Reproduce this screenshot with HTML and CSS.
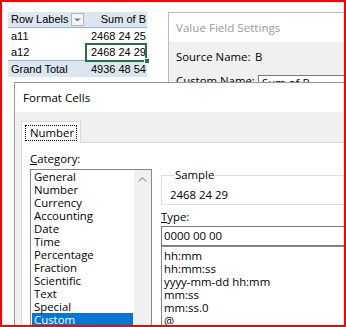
FILE: index.html
```html
<!DOCTYPE html>
<html>
<head>
<meta charset="utf-8">
<link rel="stylesheet" href="styles.css">
</head>
<body>
<div class="frame">
  <div class="pivot">
    <div class="c hdr lab"><span>Row Labels</span><span class="dd"><svg width="7" height="4" viewBox="0 0 7 4"><path d="M0 0.5h7L3.5 3.5z" fill="#808080"/></svg></span></div>
    <div class="c hdr num">Sum of B</div>
    <div class="c">a11</div>
    <div class="c num">2468 24 25</div>
    <div class="c">a12</div>
    <div class="c num sel">2468 24 29<span class="handle"></span></div>
    <div class="c tot">Grand Total</div>
    <div class="c tot num">4936 48 54</div>
  </div>

  <div class="win vfs">
    <div class="title">Value Field Settings</div>
    <div class="vbody">
      <div class="vlabel">Source Name:</div>
      <div class="vval">B</div>
      <div class="vlabel cn">Custom Name:</div>
      <div class="vinput">Sum of B</div>
    </div>
  </div>

  <div class="win fc">
    <div class="title">Format Cells</div>
    <div class="fbody">
      <div class="tab"><span class="focus">Number</span></div>
      <div class="panel">
        <div class="col-left">
          <div class="lbl"><u>C</u>ategory:</div>
          <div class="listbox">
            <div class="items">
              <div class="it">General</div>
              <div class="it">Number</div>
              <div class="it">Currency</div>
              <div class="it">Accounting</div>
              <div class="it">Date</div>
              <div class="it">Time</div>
              <div class="it">Percentage</div>
              <div class="it">Fraction</div>
              <div class="it">Scientific</div>
              <div class="it">Text</div>
              <div class="it">Special</div>
              <div class="it on">Custom</div>
            </div>
            <div class="sbar"><div class="up"><svg width="9" height="5" viewBox="0 0 9 5"><path d="M0.5 4.5L4.5 0.8L8.5 4.5" fill="none" stroke="#a6a6a6" stroke-width="1.2"/></svg></div></div>
          </div>
        </div>
        <div class="col-right">
          <fieldset class="sample">
            <legend>Sample</legend>
            <div class="sval">2468 24 29</div>
          </fieldset>
          <div class="lbl tlbl"><u>T</u>ype:</div>
          <div class="tinput">0000 00 00</div>
          <div class="tlist">
            <div class="ti">hh:mm</div>
            <div class="ti">hh:mm:ss</div>
            <div class="ti">yyyy-mm-dd hh:mm</div>
            <div class="ti">mm:ss</div>
            <div class="ti">mm:ss.0</div>
            <div class="ti">@</div>
          </div>
        </div>
      </div>
    </div>
  </div>
</div>
</body>
</html>
```

FILE: styles.css
```css
* { box-sizing: border-box; }
html, body { margin: 0; padding: 0; }
body { width: 346px; height: 327px; overflow: hidden; background: #fff; }

.frame {
  position: relative;
  width: 346px;
  height: 327px;
  border: 2px solid #ff0000;
  overflow: hidden;
  background: #fff;
  font-family: "Open Sans", "Noto Sans", sans-serif;
  font-size: 11.4px;
  color: #000;
}

/* pivot table */
.pivot {
  margin: 10px 0 0 6px;
  width: 139px;
  display: grid;
  grid-template-columns: 77px 62px;
  font-family: "Liberation Sans", Arial, sans-serif;
  font-size: 11px;
}
.pivot .c {
  height: 16px;
  line-height: 16px;
  padding-left: 3px;
  white-space: nowrap;
}
.pivot .num { text-align: right; padding-right: 1px; padding-left: 0; }
.pivot .hdr {
  background: #dce6f1;
  border-bottom: 1px solid #95b3d7;
  line-height: 15px;
}
.pivot .lab {
  display: flex;
  justify-content: space-between;
  align-items: center;
  padding-right: 1px;
}
.dd {
  width: 13px;
  height: 13px;
  border: 1px solid #b4b4b4;
  background: #f4f4f4;
  display: flex;
  align-items: center;
  justify-content: center;
  flex: none;
}
.pivot .tot {
  background: #dce6f1;
  border-top: 1px solid #95b3d7;
  height: 17px;
}
.sel { position: relative; }
.sel::after {
  content: "";
  position: absolute;
  left: 0; right: 0; top: -1px; bottom: -2px;
  border: 2px solid #217346;
}
.handle {
  position: absolute;
  right: -3px;
  bottom: -4px;
  width: 6px;
  height: 6px;
  background: #217346;
  border: 1px solid #fff;
  z-index: 2;
}

/* windows */
.win {
  position: absolute;
  background: #f0f0f0;
  border: 1px solid #a0a0a0;
}
.win .title {
  height: 29px;
  line-height: 29px;
  background: #fff;
  white-space: nowrap;
  font-size: 11.6px;
}
.vfs { left: 166px; top: 10px; width: 200px; height: 100px; border-color: #b9b9b9; }
.vfs .title { padding-left: 7px; color: #9a9a9a; }
.vbody {
  display: grid;
  grid-template-columns: 79px 1fr;
  align-items: start;
  padding: 8px 0 0 7px;
  row-gap: 9px;
  white-space: nowrap;
}
.vlabel, .vval { line-height: 14px; }
.vlabel.cn { padding-top: 1px; }
.vinput {
  margin: 2px 0 0 3px;
  height: 20px;
  border: 1px solid #7a7a7a;
  background: #fff;
  padding: 0 3px;
  line-height: 14px;
}

.fc { left: 12px; top: 80px; width: 340px; height: 260px; border-color: #999; }
.fc .title { padding-left: 8px; }
.fbody { padding: 9px 0 0 6px; }
.tab {
  position: relative;
  z-index: 1;
  width: 60px;
  height: 22px;
  margin-bottom: -1px;
  background: #fff;
  border: 1px solid #d9d9d9;
  border-bottom: none;
  padding: 3px 0 0 3px;
}
.focus {
  display: block;
  width: 52px;
  height: 16px;
  border: 1px dotted #000;
  padding-left: 4px;
  line-height: 14px;
  white-space: nowrap;
}
.panel {
  background: #fff;
  border: 1px solid #d9d9d9;
  height: 200px;
  padding: 9px 0 0 8px;
  display: flex;
  gap: 9px;
}
.lbl { line-height: 14px; white-space: nowrap; }
.col-left { width: 122px; flex: none; }
.listbox {
  margin-top: 3px;
  height: 170px;
  border: 1px solid #828790;
  display: flex;
}
.items { flex: 1; padding-top: 0; }
.it {
  margin: 0 1px;
  height: 13px;
  line-height: 13px;
  padding-left: 2px;
  white-space: nowrap;
}
.it.on { background: #0078d7; color: #fff; }
.sbar { width: 17px; flex: none; background: #f0f0f0; }
.up { height: 17px; display: flex; align-items: center; justify-content: center; padding-top: 1px; }

.col-right { width: 200px; flex: none; }
.sample {
  margin: 16px 0 0 0;
  padding: 6px 0 2px 8px;
  border: 1px solid #dcdcdc;
  min-width: 0;
}
.sample legend {
  padding: 0 1px;
  margin-left: 4px;
  line-height: 14px;
}
.sval { line-height: 14px; white-space: nowrap; }
.tlbl { margin-top: 5px; }
.tinput {
  margin-top: 2px;
  height: 20px;
  border: 1px solid #7a7a7a;
  padding-left: 2px;
  line-height: 18px;
  white-space: nowrap;
}
.tlist {
  border: 1px solid #828790;
  height: 100px;
  padding: 2px 0 0 2px;
}
.ti { height: 13px; line-height: 13px; white-space: nowrap; }
```
